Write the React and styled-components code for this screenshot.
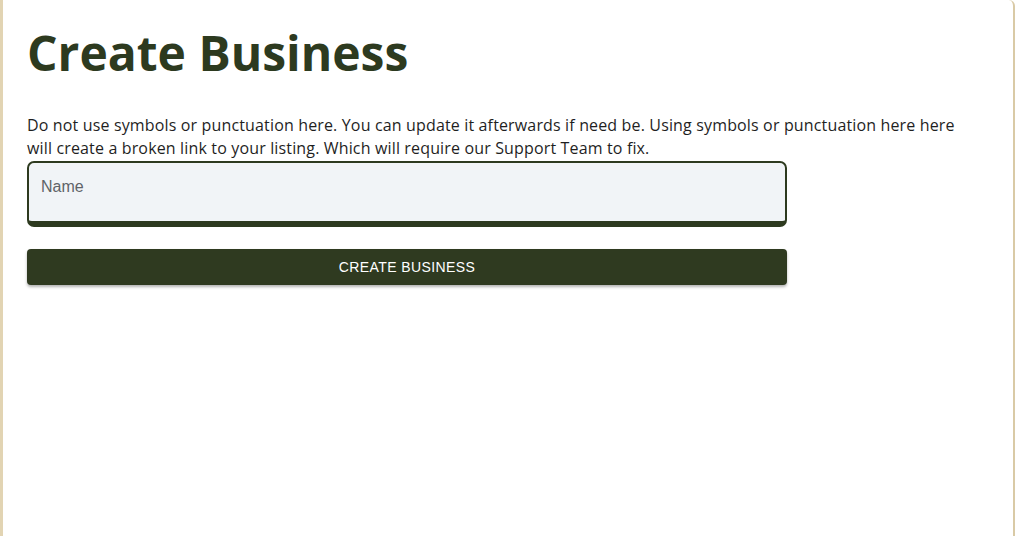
import React from 'react'
import { styled, createGlobalStyle } from 'styled-components'

const GlobalStyle = createGlobalStyle`
  html, body {
    margin: 0;
    padding: 0;
    background: #ffffff;
  }
  * { box-sizing: border-box; }
`

const Page = styled.div`
  height: 536px;
  background: #ffffff;
  display: flex;
`

const Card = styled.div`
  flex: 1;
  margin-right: 3px;
  background: #ffffff;
  border-left: 3px solid #e2d4b3;
  border-right: 2px solid #d9caa6;
  border-top-right-radius: 6px;
  padding: 20px 24px 0 24px;
`

const Title = styled.h1`
  margin: 0 0 28px 0;
  font-family: 'Open Sans', sans-serif;
  font-weight: 700;
  font-size: 48px;
  line-height: 66px;
  color: #2d3a1f;
`

const Hint = styled.p`
  margin: 0 0 1px 0;
  max-width: 940px;
  font-family: 'Open Sans', sans-serif;
  font-size: 16px;
  line-height: 23px;
  letter-spacing: 0.15px;
  color: #1f1f1f;
`

const Form = styled.form`
  width: 760px;
  display: flex;
  flex-direction: column;
  gap: 22px;
`

const NameInput = styled.input`
  width: 100%;
  height: 66px;
  padding: 0 12px 10px 12px;
  border: 2px solid #2d3a1f;
  border-bottom-width: 6px;
  border-radius: 7px;
  background: #f1f4f7;
  font-family: 'Liberation Sans', Arial, sans-serif;
  font-size: 16px;
  color: #333;
  outline: none;

  &::placeholder {
    color: #5f6368;
  }
`

const SubmitButton = styled.button`
  height: 36px;
  border: none;
  border-radius: 4px;
  background: #2f3a20;
  color: #ffffff;
  font-family: 'Liberation Sans', Arial, sans-serif;
  font-size: 14px;
  letter-spacing: 0.4px;
  text-transform: uppercase;
  box-shadow: 0 2px 3px rgba(0, 0, 0, 0.3);
  cursor: pointer;
`

export default function App() {
  return (
    <>
      <GlobalStyle />
      <Page>
        <Card>
          <Title>Create Business</Title>
          <Hint>
            Do not use symbols or punctuation here. You can update it afterwards if need be. Using symbols or punctuation here here will create a broken link to your listing. Which will require our Support Team to fix.
          </Hint>
          <Form onSubmit={(e) => e.preventDefault()}>
            <NameInput placeholder="Name" />
            <SubmitButton type="submit">Create Business</SubmitButton>
          </Form>
        </Card>
      </Page>
    </>
  )
}
